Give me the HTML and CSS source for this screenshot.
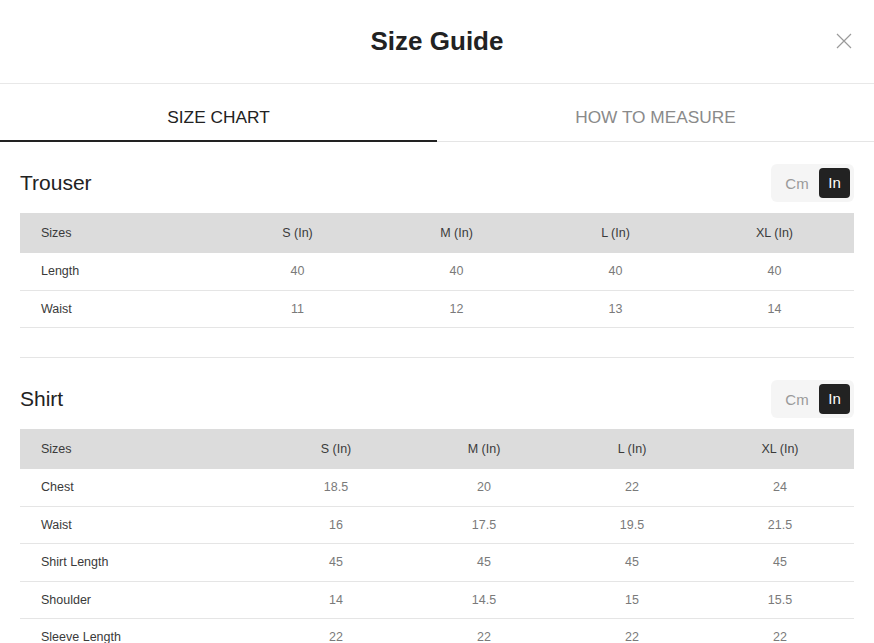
FILE: index.html
```html
<!DOCTYPE html>
<html lang="en">
  <head>
    <meta charset="UTF-8" />
    <meta name="viewport" content="width=device-width, initial-scale=1.0" />
    <title>Size Guide</title>
    <link rel="stylesheet" href="styles.css">
  </head>
  <body>
    <div class="modal">
      <div class="modal-header">
        <h1>Size Guide</h1>
        <button class="close" aria-label="Close">
          <svg width="16" height="16" viewBox="0 0 16 16">
            <path d="M1 1 L15 15 M15 1 L1 15" stroke="#9a9a9a" stroke-width="1.2" fill="none" />
          </svg>
        </button>
      </div>
      <div class="tabs">
        <div class="tab active">SIZE CHART</div>
        <div class="tab">HOW TO MEASURE</div>
      </div>

      <div class="section trouser">
        <div class="section-head">
          <h2>Trouser</h2>
          <div class="units">
            <span class="unit">Cm</span>
            <span class="unit selected">In</span>
          </div>
        </div>
        <table class="chart">
          <colgroup>
            <col class="col-label" />
            <col span="4" />
          </colgroup>
          <tr>
            <th>Sizes</th><th>S (In)</th><th>M (In)</th><th>L (In)</th><th>XL (In)</th>
          </tr>
          <tr>
            <td>Length</td><td>40</td><td>40</td><td>40</td><td>40</td>
          </tr>
          <tr>
            <td>Waist</td><td>11</td><td>12</td><td>13</td><td>14</td>
          </tr>
        </table>
      </div>

      <div class="section shirt">
        <div class="section-head">
          <h2>Shirt</h2>
          <div class="units">
            <span class="unit">Cm</span>
            <span class="unit selected">In</span>
          </div>
        </div>
        <table class="chart">
          <colgroup>
            <col class="col-label" />
            <col span="4" />
          </colgroup>
          <tr>
            <th>Sizes</th><th>S (In)</th><th>M (In)</th><th>L (In)</th><th>XL (In)</th>
          </tr>
          <tr>
            <td>Chest</td><td>18.5</td><td>20</td><td>22</td><td>24</td>
          </tr>
          <tr>
            <td>Waist</td><td>16</td><td>17.5</td><td>19.5</td><td>21.5</td>
          </tr>
          <tr>
            <td>Shirt Length</td><td>45</td><td>45</td><td>45</td><td>45</td>
          </tr>
          <tr>
            <td>Shoulder</td><td>14</td><td>14.5</td><td>15</td><td>15.5</td>
          </tr>
          <tr>
            <td>Sleeve Length</td><td>22</td><td>22</td><td>22</td><td>22</td>
          </tr>
        </table>
      </div>
    </div>
  </body>
</html>
```

FILE: styles.css
```css
body {
  font-family: "Liberation Sans", Arimo, Helvetica, sans-serif;
  background-color: #fff;
  color: #222;
  margin: 0;
  padding: 0;
}
.modal {
  width: 874px;
}
.modal-header {
  height: 84px;
  display: flex;
  align-items: center;
  justify-content: center;
  position: relative;
  border-bottom: 1px solid #e8e8e8;
  box-sizing: border-box;
}
.modal-header h1 {
  margin: 0;
  font-size: 26px;
  font-weight: bold;
  color: #222;
}
.close {
  position: absolute;
  right: 22px;
  top: 33px;
  background: none;
  border: none;
  padding: 0;
  width: 16px;
  height: 16px;
  cursor: pointer;
}
.close svg {
  display: block;
}
.tabs {
  display: flex;
  height: 57px;
  border-bottom: 1px solid #e5e5e5;
}
.tab {
  flex: 1;
  display: flex;
  align-items: center;
  justify-content: center;
  font-size: 17.3px;
  color: #8a8a8a;
  padding-top: 10px;
  box-sizing: border-box;
  border-bottom: 2px solid transparent;
  margin-bottom: -1px;
}
.tab.active {
  color: #222;
  border-bottom-color: #222;
}
.section {
  margin: 0 20px;
  padding: 22px 0 29px;
  border-bottom: 1px solid #e5e5e5;
}
.section-head {
  display: flex;
  align-items: center;
  justify-content: space-between;
  height: 38px;
  margin-bottom: 11px;
}
.section-head h2 {
  margin: 0;
  font-size: 21px;
  font-weight: normal;
  color: #222;
}
.units {
  display: flex;
  align-items: center;
  background-color: #f5f5f5;
  border-radius: 6px;
  padding: 4px;
  height: 38px;
  box-sizing: border-box;
}
.unit {
  font-size: 15px;
  color: #9a9a9a;
  width: 44px;
  text-align: center;
}
.unit.selected {
  width: 31px;
  height: 30px;
  line-height: 30px;
  background-color: #222;
  color: #fff;
  border-radius: 4px;
}
.chart {
  width: 100%;
  border-collapse: collapse;
  table-layout: fixed;
  font-size: 12.5px;
}
.trouser .col-label {
  width: 198px;
}
.shirt .col-label {
  width: 242px;
}
.chart th {
  background-color: #dcdcdc;
  font-weight: normal;
  color: #3a3a3a;
  height: 40px;
  padding: 0 21px;
  text-align: center;
}
.chart td {
  height: 36.5px;
  padding: 0 21px;
  text-align: center;
  color: #7a7a7a;
  border-bottom: 1px solid #e5e5e5;
}
.chart th:first-child,
.chart td:first-child {
  text-align: left;
  color: #3a3a3a;
}
```
